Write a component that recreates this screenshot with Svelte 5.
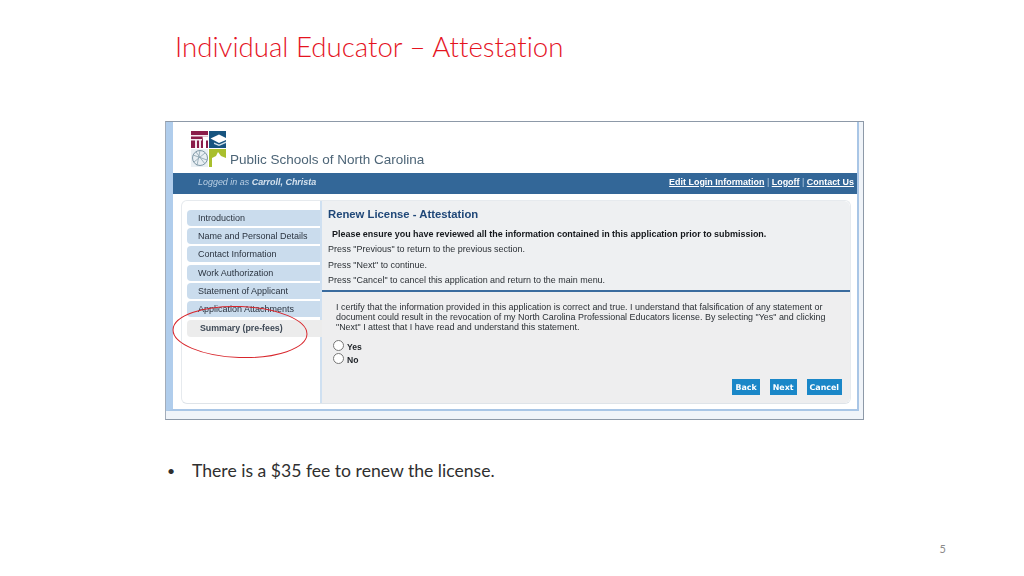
<script lang="ts">
  const steps = ['Introduction', 'Name and Personal Details', 'Contact Information', 'Work Authorization', 'Statement of Applicant', 'Application Attachments'];
  const hints = ['Press "Previous" to return to the previous section.', 'Press "Next" to continue.', 'Press "Cancel" to cancel this application and return to the main menu.'];
</script>

<div class="slide">
  <h1>Individual Educator – Attestation</h1>

  <div class="shot">
    <div class="page">
      <header>
        <svg class="logo" width="35" height="36" viewBox="0 0 35 36">
          <!-- pillar -->
          <rect x="0" y="0" width="17" height="17" fill="#8a1c4a" />
          <path d="M0 4h17v1.5H0zM0 8h11v1.5H0zM4 9.5h2V17H4zM8 9.5h2V17H8z" fill="#f4e8ee" />
          <path d="M11.5 5.5h5.5V9.5h-2V17h-3V9.5z" fill="#fff" />
          <!-- mortarboard -->
          <rect x="18" y="0" width="17" height="17" fill="#17547f" />
          <path d="M19.5 7.5L28 3.5l7 3.5v2l-7 3z" fill="#fff" />
          <path d="M23 11.5l5 2 7-3v1.500l-7 3-5-2z" fill="#cfe0ea" />
          <!-- globe -->
          <rect x="0" y="18" width="17" height="18" fill="#e9eff3" />
          <circle cx="9" cy="27" r="7.500" fill="none" stroke="#7f98a6" stroke-width="1" />
          <path d="M2 24l14 5M9 19.500l-3 15M3 31l11-9M5 21l9 12" stroke="#8aa2af" stroke-width=".8" fill="none" />
          <!-- building -->
          <rect x="18" y="18" width="17" height="18" fill="#a9bf2d" />
          <path d="M21 36v-9l4-2 2-4 3 4 5 2v9z" fill="#fff" />
        </svg>
        <span class="org">Public Schools of North Carolina</span>
      </header>

      <div class="bar">
        <span class="who">Logged in as <b>Carroll, Christa</b></span>
        <span class="links"><u>Edit Login Information</u> <i>|</i> <u>Logoff</u> <i>|</i> <u>Contact Us</u></span>
      </div>

      <div class="panel">
        <nav>
          {#each steps as s}
            <div class="step">{s}</div>
          {/each}
          <div class="step current">Summary (pre-fees)</div>
        </nav>

        <main>
          <div class="intro">
            <h2>Renew License - Attestation</h2>
            <p class="ensure">Please ensure you have reviewed all the information contained in this application prior to submission.</p>
            {#each hints as h}
              <p class="hint">{h}</p>
            {/each}
          </div>

          <div class="form">
            <p class="certify">I certify that the information provided in this application is correct and true. I understand that falsification of any statement or<br />document could result in the revocation of my North Carolina Professional Educators license. By selecting "Yes" and clicking<br />"Next" I attest that I have read and understand this statement.</p>
            <label><input type="radio" name="attest" /><span>Yes</span></label>
            <label><input type="radio" name="attest" /><span>No</span></label>
            <div class="buttons">
              <button>Back</button>
              <button>Next</button>
              <button>Cancel</button>
            </div>
          </div>
        </main>
      </div>
    </div>
  </div>

  <ul>
    <li>There is a $35 fee to renew the license.</li>
  </ul>

  <div class="num">5</div>

  <svg class="circle" width="150" height="64" viewBox="0 0 150 64">
    <ellipse cx="74" cy="31" rx="67" ry="25.5" fill="none" stroke="#d8262c" stroke-width="1" transform="rotate(2 74 31)" />
  </svg>
</div>

<style>
  :global(body) { margin: 0; background: #fff; }

  .slide { position: relative; width: 1024px; height: 576px; overflow: hidden; background: #fff; font-family: Lato, sans-serif; }

  h1 { margin: 0; padding: 28px 0 0 175px; height: 121px; box-sizing: border-box; font-size: 27.65px; line-height: 38px; font-weight: 300; color: #e5141f; font-variant-ligatures: none; }

  .shot {
    margin-left: 165px; width: 699px; height: 299px; box-sizing: border-box;
    border: 1px solid #8d99a8; border-left-color: #a3adba; background: #f0f4f9;
    padding: 0 4px 8px 0;
    font-family: "Liberation Sans", sans-serif;
    filter: blur(0.45px);
  }

  .page { height: 100%; box-sizing: border-box; background: #fff; border-left: 7px solid #b0cdec; border-right: 2px solid #a9c6e6; border-bottom: 2px solid #a9c6e6; }

  header { height: 51px; box-sizing: border-box; padding: 9px 0 6px 18px; display: flex; align-items: flex-end; gap: 4px; }
  .logo { flex: none; }
  .org { font-size: 13.5px; line-height: 16px; margin-bottom: -1px; color: #4d6577; }

  .bar { height: 21px; background: #336798; color: #fff; display: flex; align-items: center; justify-content: space-between; padding: 0 3px 4px 25px; box-sizing: border-box; font-size: 8.95px; }
  .who { font-style: italic; color: #b9cfe4; }
  .who b { color: #d5e2ee; }
  .links { font-weight: bold; }
  .links i { font-weight: normal; font-style: normal; color: #b9cfe4; }

  .panel { height: 204px; margin: 6px 6px 0 8px; display: flex; border: 1px solid #e6eaee; border-bottom-color: #dfe4e9; border-radius: 6px; box-sizing: border-box; }

  nav { width: 138px; flex: none; padding: 9px 0 0 5px; box-sizing: border-box; display: flex; flex-direction: column; gap: 2.2px; }
  .step { height: 16px; line-height: 16px; padding-left: 11px; background: #cadced; border-radius: 4px 0 0 4px; font-size: 9px; color: #2b3440; }
  .step.current { position: relative; height: 17px; line-height: 17px; margin-right: -2px; margin-top: 0.5px; padding-left: 13px; background: #ececec; font-size: 8.8px; font-weight: bold; color: #3f4a57; }

  main { flex: 1; min-width: 0; background: #eef0f2; border-left: 2px solid #cfe0f1; border-radius: 0 6px 6px 0; display: flex; flex-direction: column; }

  .intro { height: 91px; box-sizing: border-box; padding: 7px 0 0 6px; border-bottom: 2px solid #3a6b9e; }
  h2 { margin: 0 0 8px; font-size: 11.3px; line-height: 13px; color: #1f4778; }
  .ensure { margin: 0 0 5px 4px; font-size: 8.96px; line-height: 10px; font-weight: bold; color: #15181c; }
  .hint { margin: 0 0 5.5px; font-size: 8.96px; line-height: 10px; color: #2b3035; }

  .form { flex: 1; position: relative; padding: 10px 0 0 14px; background: #eeeeef; border-radius: 0 0 6px 0; }
  .certify { margin: 0 0 8px; font-size: 8.93px; line-height: 10px; color: #2b3035; }
  label { display: flex; align-items: center; gap: 3px; height: 13px; margin-left: -3px; font-size: 8.6px; font-weight: bold; color: #1d2126; }
  input { width: 11px; height: 11px; margin: -2px 0 0; flex: none; }

  .buttons { position: absolute; right: 8px; bottom: 8px; display: flex; gap: 10px; }
  button { height: 16px; padding: 0 3px; border: none; background: #1a87c8; color: #fff; font: bold 7.9px "DejaVu Sans", sans-serif; }

  ul { margin: 41px 0 0; padding: 0 0 0 192px; list-style: none; font-size: 17.6px; line-height: 20px; color: #2f2f2f; position: relative; }
  li::before { content: '•'; position: absolute; left: 167px; font-size: 14px; }

  .num { position: absolute; right: 78px; top: 542px; font-size: 11px; line-height: 14px; color: #8a8a8a; }

  .circle { position: absolute; left: 166px; top: 301px; }
</style>
